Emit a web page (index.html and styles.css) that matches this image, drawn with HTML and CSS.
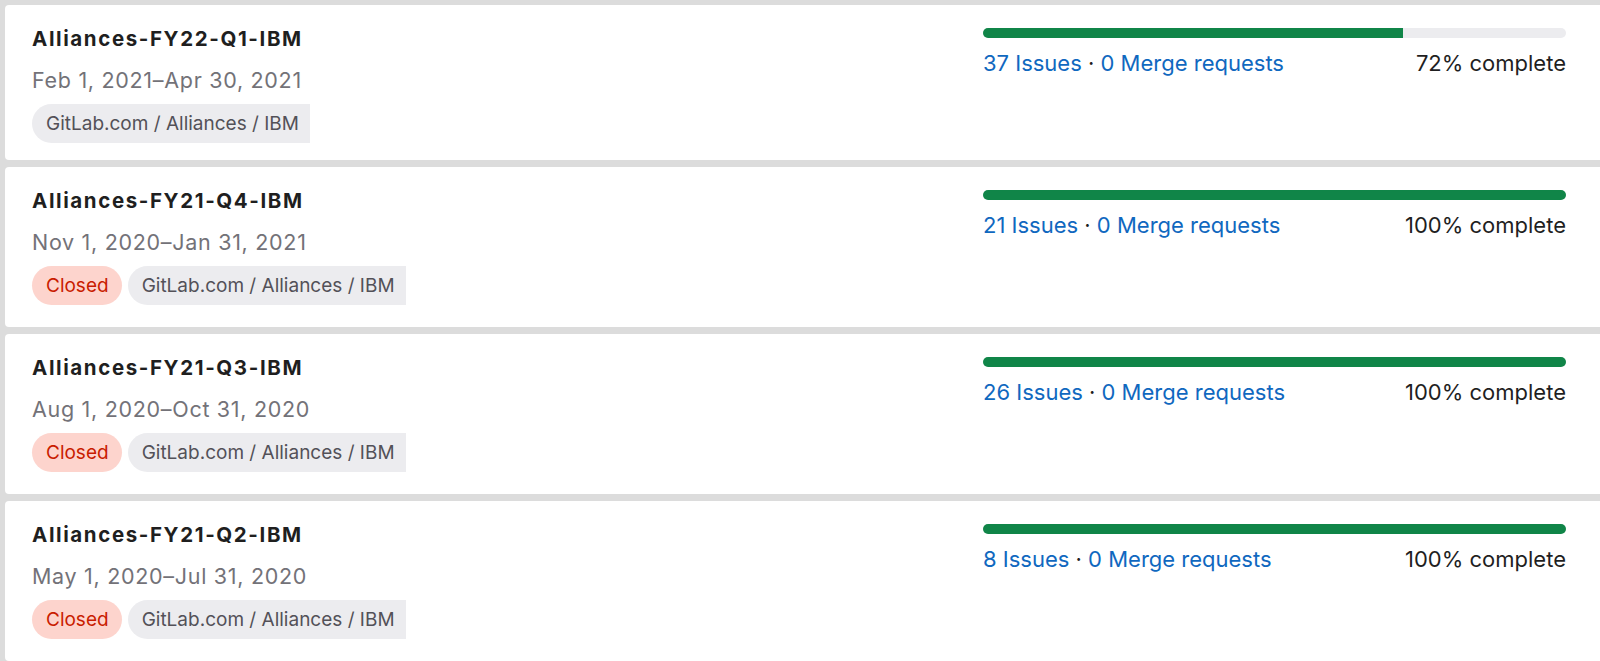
FILE: index.html
```html
<!DOCTYPE html>
<html lang="en">
<head>
<meta charset="utf-8">
<title>Milestones</title>
<link rel="stylesheet" href="styles.css">
</head>
<body>
<ul class="milestones">
  <li class="card card-first">
    <div class="info">
      <div class="title">Alliances-FY22-Q1-IBM</div>
      <div class="dates">Feb 1, 2021–Apr 30, 2021</div>
      <div class="badges">
        <span class="badge badge-path">GitLab.com / Alliances / IBM</span>
      </div>
    </div>
    <div class="progress">
      <div class="bar"><div class="fill" style="width:72%"></div></div>
      <div class="stats">
        <span class="links"><a href="#">37 Issues</a> · <a href="#">0 Merge requests</a></span>
        <span class="pct">72% complete</span>
      </div>
    </div>
  </li>
  <li class="card">
    <div class="info">
      <div class="title">Alliances-FY21-Q4-IBM</div>
      <div class="dates">Nov 1, 2020–Jan 31, 2021</div>
      <div class="badges">
        <span class="badge badge-closed">Closed</span>
        <span class="badge badge-path">GitLab.com / Alliances / IBM</span>
      </div>
    </div>
    <div class="progress">
      <div class="bar"><div class="fill" style="width:100%"></div></div>
      <div class="stats">
        <span class="links"><a href="#">21 Issues</a> · <a href="#">0 Merge requests</a></span>
        <span class="pct">100% complete</span>
      </div>
    </div>
  </li>
  <li class="card">
    <div class="info">
      <div class="title">Alliances-FY21-Q3-IBM</div>
      <div class="dates">Aug 1, 2020–Oct 31, 2020</div>
      <div class="badges">
        <span class="badge badge-closed">Closed</span>
        <span class="badge badge-path">GitLab.com / Alliances / IBM</span>
      </div>
    </div>
    <div class="progress">
      <div class="bar"><div class="fill" style="width:100%"></div></div>
      <div class="stats">
        <span class="links"><a href="#">26 Issues</a> · <a href="#">0 Merge requests</a></span>
        <span class="pct">100% complete</span>
      </div>
    </div>
  </li>
  <li class="card">
    <div class="info">
      <div class="title">Alliances-FY21-Q2-IBM</div>
      <div class="dates">May 1, 2020–Jul 31, 2020</div>
      <div class="badges">
        <span class="badge badge-closed">Closed</span>
        <span class="badge badge-path">GitLab.com / Alliances / IBM</span>
      </div>
    </div>
    <div class="progress">
      <div class="bar"><div class="fill" style="width:100%"></div></div>
      <div class="stats">
        <span class="links"><a href="#">8 Issues</a> · <a href="#">0 Merge requests</a></span>
        <span class="pct">100% complete</span>
      </div>
    </div>
  </li>
</ul>
</body>
</html>
```

FILE: styles.css
```css
html, body {
  margin: 0;
  padding: 0;
  background: #dcdcdc;
  overflow: hidden;
}
body {
  font-family: Inter, "Noto Sans", "Liberation Sans", sans-serif;
  color: #1f1f1f;
}
.milestones {
  list-style: none;
  margin: 0;
  padding: 5px 0 0 5px;
  display: flex;
  flex-direction: column;
  gap: 7px;
}
.card {
  background: #fff;
  border-radius: 4px 0 0 4px;
  display: flex;
  justify-content: space-between;
  padding: 20px 34px 22px 27px;
}
.card-first {
  padding-bottom: 17px;
}
.info {
  display: flex;
  flex-direction: column;
}
.title {
  font-size: 20.5px;
  font-weight: 700;
  letter-spacing: 1.6px;
  line-height: 28px;
  color: #1f1f1f;
}
.dates {
  margin-top: 13px;
  font-size: 21.5px;
  letter-spacing: 0.7px;
  line-height: 28px;
  color: #737278;
}
.badges {
  margin-top: 10px;
  display: flex;
  gap: 6px;
}
.badge {
  height: 39px;
  display: flex;
  align-items: center;
  font-size: 19px;
  box-sizing: border-box;
}
.badge-closed {
  background: #fdd4cd;
  color: #c91c00;
  border-radius: 20px;
  padding: 0 13px 0 14px;
}
.badge-path {
  background: #ececef;
  color: #535158;
  border-radius: 20px 0 0 20px;
  padding: 0 11px 0 14px;
}
.progress {
  width: 583px;
  padding-top: 3px;
}
.bar {
  height: 10px;
  border-radius: 5px;
  background: #ececef;
  overflow: hidden;
}
.fill {
  height: 100%;
  background: #108548;
}
.stats {
  margin-top: 11px;
  display: flex;
  justify-content: space-between;
  font-size: 22px;
  line-height: 28px;
}
.links {
  color: #1f1f1f;
}
.links a {
  color: #1068bf;
  text-decoration: none;
}
.pct {
  color: #1f1f1f;
}
```
